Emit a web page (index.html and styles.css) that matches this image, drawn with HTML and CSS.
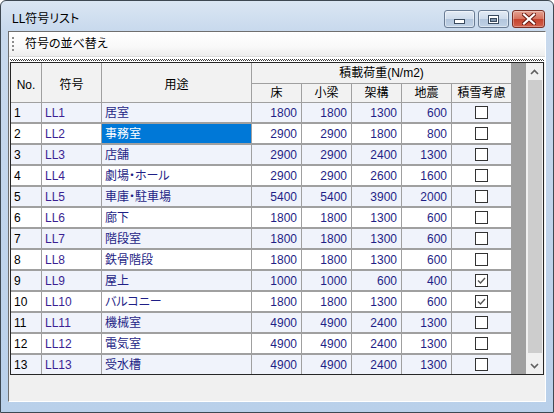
FILE: index.html
```html
<!DOCTYPE html>
<html lang="ja">
<head>
<meta charset="utf-8">
<title>LL符号リスト</title>
<link rel="stylesheet" href="styles.css">
</head>
<body>
<div class="window">
  <div class="titlebar">
    <span class="title">LL符号リスト</span>
    <div class="caption-btns">
      <div class="cbtn min">
        <svg width="11" height="5" viewBox="0 0 11 5"><rect x="0.5" y="0.5" width="10" height="4" fill="#fff" stroke="#3a4a5e"/></svg>
      </div>
      <div class="cbtn max">
        <svg width="11" height="9" viewBox="0 0 11 9"><rect x="0.5" y="0.5" width="10" height="8" fill="#fff" stroke="#3a4a5e"/><rect x="2.5" y="3.5" width="6" height="3" fill="#8296ad" stroke="#3a4a5e"/></svg>
      </div>
      <div class="cbtn close">
        <svg width="14" height="12" viewBox="0 0 14 12"><path d="M2 1.5 L12 10.5 M12 1.5 L2 10.5" stroke="#6b1d14" stroke-width="4.2" stroke-linecap="square"/><path d="M2 1.5 L12 10.5 M12 1.5 L2 10.5" stroke="#fff" stroke-width="2.2" stroke-linecap="square"/></svg>
      </div>
    </div>
  </div>
  <div class="client">
    <div class="toolbar">
      <span class="grip"></span>
      <span class="tb-label">符号の並べ替え</span>
    </div>
    <div class="sep"><div class="dots"></div></div>
    <div class="grid">
      <div class="cols">
        <div class="hdr">
          <div class="h span2">No.</div>
          <div class="h span2">符号</div>
          <div class="h span2">用途</div>
          <div class="h load">積載荷重(N/m2)</div>
          <div class="h">床</div>
          <div class="h">小梁</div>
          <div class="h">架構</div>
          <div class="h">地震</div>
          <div class="h">積雪考慮</div>
        </div>
        <div class="rows">
          <div class="row odd"><span class="c no">1</span><span class="c code">LL1</span><span class="c use">居室</span><span class="c num">1800</span><span class="c num">1800</span><span class="c num">1300</span><span class="c num">600</span><span class="c chk"><span class="cb"></span></span></div>
          <div class="row"><span class="c no">2</span><span class="c code">LL2</span><span class="c use sel">事務室</span><span class="c num">2900</span><span class="c num">2900</span><span class="c num">1800</span><span class="c num">800</span><span class="c chk"><span class="cb"></span></span></div>
          <div class="row odd"><span class="c no">3</span><span class="c code">LL3</span><span class="c use">店舗</span><span class="c num">2900</span><span class="c num">2900</span><span class="c num">2400</span><span class="c num">1300</span><span class="c chk"><span class="cb"></span></span></div>
          <div class="row"><span class="c no">4</span><span class="c code">LL4</span><span class="c use">劇場・ホール</span><span class="c num">2900</span><span class="c num">2900</span><span class="c num">2600</span><span class="c num">1600</span><span class="c chk"><span class="cb"></span></span></div>
          <div class="row odd"><span class="c no">5</span><span class="c code">LL5</span><span class="c use">車庫・駐車場</span><span class="c num">5400</span><span class="c num">5400</span><span class="c num">3900</span><span class="c num">2000</span><span class="c chk"><span class="cb"></span></span></div>
          <div class="row"><span class="c no">6</span><span class="c code">LL6</span><span class="c use">廊下</span><span class="c num">1800</span><span class="c num">1800</span><span class="c num">1300</span><span class="c num">600</span><span class="c chk"><span class="cb"></span></span></div>
          <div class="row odd"><span class="c no">7</span><span class="c code">LL7</span><span class="c use">階段室</span><span class="c num">1800</span><span class="c num">1800</span><span class="c num">1300</span><span class="c num">600</span><span class="c chk"><span class="cb"></span></span></div>
          <div class="row"><span class="c no">8</span><span class="c code">LL8</span><span class="c use">鉄骨階段</span><span class="c num">1800</span><span class="c num">1800</span><span class="c num">1300</span><span class="c num">600</span><span class="c chk"><span class="cb"></span></span></div>
          <div class="row odd"><span class="c no">9</span><span class="c code">LL9</span><span class="c use">屋上</span><span class="c num">1000</span><span class="c num">1000</span><span class="c num">600</span><span class="c num">400</span><span class="c chk"><span class="cb"><svg width="11" height="11" viewBox="0 0 11 11"><path d="M2 5.5 L4.5 8 L9 3" fill="none" stroke="#555" stroke-width="1.4"/></svg></span></span></div>
          <div class="row"><span class="c no">10</span><span class="c code">LL10</span><span class="c use">バルコニー</span><span class="c num">1800</span><span class="c num">1800</span><span class="c num">1300</span><span class="c num">600</span><span class="c chk"><span class="cb"><svg width="11" height="11" viewBox="0 0 11 11"><path d="M2 5.5 L4.5 8 L9 3" fill="none" stroke="#555" stroke-width="1.4"/></svg></span></span></div>
          <div class="row odd"><span class="c no">11</span><span class="c code">LL11</span><span class="c use">機械室</span><span class="c num">4900</span><span class="c num">4900</span><span class="c num">2400</span><span class="c num">1300</span><span class="c chk"><span class="cb"></span></span></div>
          <div class="row"><span class="c no">12</span><span class="c code">LL12</span><span class="c use">電気室</span><span class="c num">4900</span><span class="c num">4900</span><span class="c num">2400</span><span class="c num">1300</span><span class="c chk"><span class="cb"></span></span></div>
          <div class="row odd"><span class="c no">13</span><span class="c code">LL13</span><span class="c use">受水槽</span><span class="c num">4900</span><span class="c num">4900</span><span class="c num">2400</span><span class="c num">1300</span><span class="c chk"><span class="cb"></span></span></div>
        </div>
      </div>
      <div class="gutter"></div>
      <div class="vscroll">
        <div class="arrow"><svg width="9" height="6" viewBox="0 0 9 6"><path d="M1 5 L4.5 1.5 L8 5" fill="none" stroke="#606060" stroke-width="1.6"/></svg></div>
        <div class="track"><div class="thumb"></div></div>
        <div class="arrow"><svg width="9" height="6" viewBox="0 0 9 6"><path d="M1 1 L4.5 4.5 L8 1" fill="none" stroke="#606060" stroke-width="1.6"/></svg></div>
      </div>
    </div>
  </div>
</div>
</body>
</html>
```
FILE: styles.css
```css
html, body {
  margin: 0;
  padding: 0;
  background: #ffffff;
}
body {
  font-family: "Liberation Sans", "Noto Sans CJK JP", sans-serif;
  font-size: 12px;
  font-feature-settings: "palt";
  color: #000;
}
.window {
  width: 554px;
  height: 413px;
  box-sizing: border-box;
  border: 1px solid #3d4852;
  border-radius: 6px 6px 0 0;
  background: linear-gradient(to bottom, #dae6f3 0px, #c8d9ed 30px, #b9d0ea 100%);
  display: flex;
  flex-direction: column;
  overflow: hidden;
}
.titlebar {
  height: 30px;
  display: flex;
  align-items: flex-start;
  flex-shrink: 0;
}
.title {
  margin: 11px 0 0 11px;
  font-size: 12px;
  line-height: 14px;
  color: #000;
}
.caption-btns {
  margin: 9px 8px 0 auto;
  display: flex;
  gap: 3px;
}
.cbtn {
  height: 18px;
  box-sizing: border-box;
  border-radius: 3px;
  display: flex;
  align-items: center;
  justify-content: center;
}
.min, .max {
  width: 31px;
  border: 1px solid #6a7c94;
  background: linear-gradient(to bottom, #e3ebf5 0%, #cfdcec 48%, #b3c6dd 52%, #c0d1e5 100%);
  box-shadow: inset 0 0 0 1px rgba(255,255,255,0.45);
}
.min svg { margin-top: 5px; }
.close {
  width: 33px;
  border: 1px solid #7a2f25;
  background: linear-gradient(to bottom, #e4a293 0%, #d7735f 48%, #c5432e 52%, #d2614c 100%);
  box-shadow: inset 0 0 0 1px rgba(255,255,255,0.3);
}
.client {
  flex: 1;
  margin: 0 7px 10px 7px;
  border: 1px solid;
  border-color: #6f6f6f #ffffff #ffffff #6f6f6f;
  background: #f0f0f0;
  display: flex;
  flex-direction: column;
}
.toolbar {
  height: 25px;
  box-sizing: border-box;
  background: linear-gradient(to bottom, #ffffff 0%, #f9f9f9 60%, #eeeeee 100%);
  border-bottom: 1px solid #dcdcdc;
  display: flex;
  align-items: center;
  flex-shrink: 0;
}
.grip {
  width: 2px;
  height: 14px;
  margin-left: 3px;
  background: repeating-linear-gradient(to bottom, #8d8d8d 0 2px, transparent 2px 4px);
}
.tb-label {
  margin-left: 11px;
  font-size: 12px;
  line-height: 14px;
}
.sep {
  height: 5px;
  background: #ffffff;
  padding: 2px 1px 0 1px;
  box-sizing: border-box;
  flex-shrink: 0;
}
.dots {
  height: 2px;
  background:
    repeating-linear-gradient(to right, #3a3a3a 0 1px, #ffffff 1px 2px) 0 0 / 100% 1px no-repeat,
    repeating-linear-gradient(to right, #ffffff 0 1px, #3a3a3a 1px 2px) 0 1px / 100% 1px no-repeat;
}
.grid {
  margin: 0 1px;
  border: 1px solid #262626;
  display: flex;
  flex-shrink: 0;
}
.cols {
  width: 501px;
  background: #a0a0a0;
}
.hdr {
  display: grid;
  grid-template-columns: 31px 60px 150px 50px 50px 50px 50px 60px;
  grid-template-rows: 21px 19px;
}
.h {
  box-sizing: border-box;
  background: #f2f2f2;
  border-right: 1px solid #a0a0a0;
  border-bottom: 1px solid #a0a0a0;
  display: flex;
  align-items: center;
  justify-content: center;
  line-height: 14px;
  white-space: nowrap;
}
.span2 {
  grid-row: span 2;
  padding-top: 4px;
}
.load {
  grid-column: span 5;
}
.rows {
  display: flex;
  flex-direction: column;
  gap: 2px;
}
.row {
  display: grid;
  grid-template-columns: 31px 60px 150px 50px 50px 50px 50px 60px;
  height: 19px;
  background: #ffffff;
}
.row.odd {
  background: #f0f3fb;
}
.c {
  box-sizing: border-box;
  border-right: 1px solid #a0a0a0;
  line-height: 19px;
  padding: 1px 3px 0 3px;
  white-space: nowrap;
  overflow: hidden;
  color: #1f1f86;
}
.no {
  color: #000;
}
.code {
  color: #3a1f92;
}
.num {
  text-align: right;
  padding-right: 4px;
}
.sel {
  background: #0078d7;
  color: #ffffff;
}
.chk {
  display: flex;
  align-items: center;
  justify-content: center;
  padding: 0;
}
.cb {
  width: 13px;
  height: 13px;
  box-sizing: border-box;
  border: 1px solid #333333;
  background: #ffffff;
  display: flex;
}
.gutter {
  width: 14px;
  background: #a0a0a0;
}
.vscroll {
  width: 17px;
  background: #f0f0f0;
  display: flex;
  flex-direction: column;
}
.arrow {
  height: 17px;
  display: flex;
  align-items: center;
  justify-content: center;
  flex-shrink: 0;
}
.track {
  flex: 1;
  display: flex;
  flex-direction: column;
  padding: 0 1px 4px 2px;
}
.thumb {
  flex: 1;
  background: #cdcdcd;
}
```
